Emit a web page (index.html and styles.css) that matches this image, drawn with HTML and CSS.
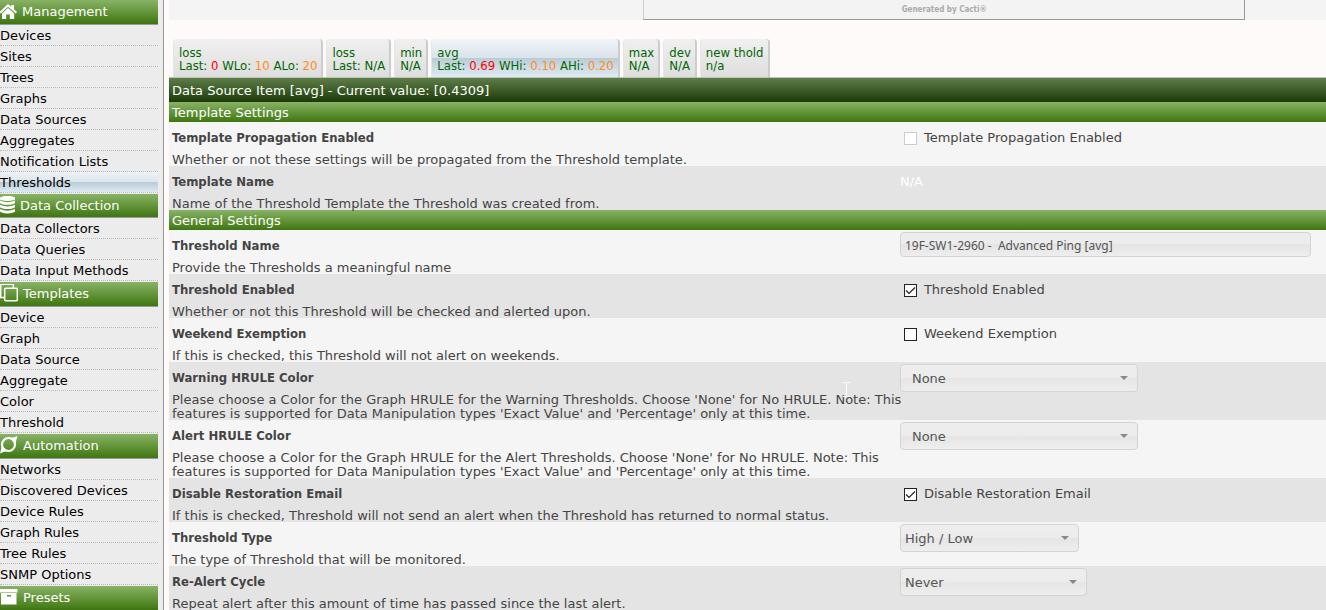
FILE: index.html
```html
<!DOCTYPE html>
<html lang="en">
<head>
<meta charset="utf-8">
<title>Thresholds</title>
<link rel="stylesheet" href="styles.css">
</head>
<body>
<div class="page">
  <nav class="sidebar">
    <h2 class="menu-head"><svg class="icon" width="17" height="20" viewBox="0 0 17 20"><path fill="#fff" d="M8 2l3.200 2.800V3H14v4.300l3 2.700-1.200 1.500L8 4.700.7 11.500-.6 10z"/><path fill="#fff" d="M8 6l6.200 5.500v5.500H9.800v-4.500H6.200V17H2v-5.500z"/></svg>Management</h2>
    <ul class="menu">
      <li><a href="#">Devices</a></li>
      <li><a href="#">Sites</a></li>
      <li><a href="#">Trees</a></li>
      <li><a href="#">Graphs</a></li>
      <li><a href="#">Data Sources</a></li>
      <li><a href="#">Aggregates</a></li>
      <li><a href="#">Notification Lists</a></li>
      <li><a href="#" class="selected">Thresholds</a></li>
    </ul>
    <h2 class="menu-head"><svg class="icon" width="15" height="19" viewBox="0 0 15 19"><g fill="#fff"><ellipse cx="7.500" cy="2.500" rx="8" ry="2.600"/><path d="M-.5 4.200q8 4 16 0v2q-1 2.600-8 2.600T-.5 6.200z"/><path d="M-.5 8.500q8 4 16 0v2q-1 2.600-8 2.600t-8-2.600z"/><path d="M-.5 12.800q8 4 16 0v2q-1 2.600-8 2.600t-8-2.600z"/></g></svg>Data Collection</h2>
    <ul class="menu">
      <li><a href="#">Data Collectors</a></li>
      <li><a href="#">Data Queries</a></li>
      <li><a href="#">Data Input Methods</a></li>
    </ul>
    <h2 class="menu-head"><svg class="icon" width="18" height="20" viewBox="0 0 18 20"><g fill="none" stroke="#fff" stroke-width="1.500"><path d="M4 13.500H.7V.2h12.600V4"/><rect x="4.700" y="4.200" width="12.600" height="12.600" rx="1"/></g></svg>Templates</h2>
    <ul class="menu">
      <li><a href="#">Device</a></li>
      <li><a href="#">Graph</a></li>
      <li><a href="#">Data Source</a></li>
      <li><a href="#">Aggregate</a></li>
      <li><a href="#">Color</a></li>
      <li><a href="#">Threshold</a></li>
    </ul>
    <h2 class="menu-head"><svg class="icon" width="18" height="20" viewBox="0 0 18 20"><circle cx="8.500" cy="8.500" r="6.500" fill="none" stroke="#fff" stroke-width="2.200"/><path fill="#fff" d="M17.500 0Q16 5 15.500 8L10 2Q14 1.500 17.500 0zM0 17.500Q1.500 12.500 1.500 9.500L7 15Q3 15.500 0 17.500z"/></svg>Automation</h2>
    <ul class="menu">
      <li><a href="#">Networks</a></li>
      <li><a href="#">Discovered Devices</a></li>
      <li><a href="#">Device Rules</a></li>
      <li><a href="#">Graph Rules</a></li>
      <li><a href="#">Tree Rules</a></li>
      <li><a href="#">SNMP Options</a></li>
    </ul>
    <h2 class="menu-head"><svg class="icon" width="18" height="20" viewBox="0 0 18 20"><path fill="#fff" d="M0 1h17.500v3.500H0zM1 4h15.500V16.500H1z"/><path fill="#5c9135" d="M1 4.500h15.500v.5H1zM7 7h4v1.500H7z"/></svg>Presets</h2>
  </nav>

  <main class="content">
    <div class="graph-strip"><div class="graph">Generated by Cacti®</div></div>
    <nav class="tabs">
      <a class="tab" href="#">loss<br>Last: <span class="red">0</span> WLo: <span class="orange">10</span> ALo: <span class="orange">20</span></a>
      <a class="tab" href="#">loss<br>Last: N/A</a>
      <a class="tab" href="#">min<br>N/A</a>
      <a class="tab active" href="#">avg<br>Last: <span class="red">0.69</span> WHi: <span class="orange">0.10</span> AHi: <span class="orange">0.20</span></a>
      <a class="tab" href="#">max<br>N/A</a>
      <a class="tab" href="#">dev<br>N/A</a>
      <a class="tab" href="#">new thold<br>n/a</a>
    </nav>
    <h1 class="title">Data Source Item [avg] - Current value: [0.4309]</h1>
    <form>
      <h3 class="section">Template Settings</h3>
      <div class="row">
        <div class="about"><div class="name">Template Propagation Enabled</div><div class="desc">Whether or not these settings will be propagated from the Threshold template.</div></div>
        <div class="field"><label class="check"><input type="checkbox" disabled>Template Propagation Enabled</label></div>
      </div>
      <div class="row alt">
        <div class="about"><div class="name">Template Name</div><div class="desc">Name of the Threshold Template the Threshold was created from.</div></div>
        <div class="field"><span class="value">N/A</span></div>
      </div>
      <h3 class="section">General Settings</h3>
      <div class="row">
        <div class="about"><label class="name" for="name">Threshold Name</label><div class="desc">Provide the Thresholds a meaningful name</div></div>
        <div class="field"><input class="text" id="name" type="text" value="19F-SW1-2960 -  Advanced Ping [avg]"></div>
      </div>
      <div class="row alt">
        <div class="about"><div class="name">Threshold Enabled</div><div class="desc">Whether or not this Threshold will be checked and alerted upon.</div></div>
        <div class="field"><label class="check"><input type="checkbox" checked>Threshold Enabled</label></div>
      </div>
      <div class="row">
        <div class="about"><div class="name">Weekend Exemption</div><div class="desc">If this is checked, this Threshold will not alert on weekends.</div></div>
        <div class="field"><label class="check"><input type="checkbox">Weekend Exemption</label></div>
      </div>
      <div class="row alt">
        <div class="about"><label class="name" for="warn">Warning HRULE Color</label><div class="desc">Please choose a Color for the Graph HRULE for the Warning Thresholds. Choose 'None' for No HRULE. Note: This features is supported for Data Manipulation types 'Exact Value' and 'Percentage' only at this time.</div>
          <svg class="pointer" width="7" height="15" viewBox="0 0 7 15"><path d="M0 .5h2.500l1 1 1-1H7M3.500 1v13M0 14.500h2.500l1-1 1 1H7" fill="none" stroke="#fff"/></svg></div>
        <div class="field"><select class="select color" id="warn"><option>None</option></select></div>
      </div>
      <div class="row">
        <div class="about"><label class="name" for="alert">Alert HRULE Color</label><div class="desc">Please choose a Color for the Graph HRULE for the Alert Thresholds. Choose 'None' for No HRULE. Note: This features is supported for Data Manipulation types 'Exact Value' and 'Percentage' only at this time.</div></div>
        <div class="field"><select class="select color" id="alert"><option>None</option></select></div>
      </div>
      <div class="row alt">
        <div class="about"><div class="name">Disable Restoration Email</div><div class="desc">If this is checked, Threshold will not send an alert when the Threshold has returned to normal status.</div></div>
        <div class="field"><label class="check"><input type="checkbox" checked>Disable Restoration Email</label></div>
      </div>
      <div class="row">
        <div class="about"><label class="name" for="type">Threshold Type</label><div class="desc">The type of Threshold that will be monitored.</div></div>
        <div class="field"><select class="select type" id="type"><option>High / Low</option></select></div>
      </div>
      <div class="row alt">
        <div class="about"><label class="name" for="cycle">Re-Alert Cycle</label><div class="desc">Repeat alert after this amount of time has passed since the last alert.</div></div>
        <div class="field"><select class="select cycle" id="cycle"><option>Never</option></select></div>
      </div>
    </form>
  </main>
</div>
</body>
</html>
```
FILE: styles.css
```css
* { box-sizing: border-box; }
body {
  margin: 0;
  background: #fffafa;
  color: #444;
  font: 13px/14px "DejaVu Sans", Verdana, sans-serif;
  overflow: hidden;
}
h1, h2, h3, ul { margin: 0; padding: 0; font-size: 13px; font-weight: normal; }
a { text-decoration: none; }
.page { display: flex; }

.sidebar {
  width: 164px;
  flex: none;
  padding-right: 5px;
  background: #ececec;
  border-right: 1px solid #999;
}
.menu-head {
  display: flex;
  align-items: center;
  gap: 5px;
  padding: 2px 0;
  color: #fff;
  background: linear-gradient(#88b365, #3f7610);
  border-bottom: 1px solid #999;
}
.icon { flex: none; }
.menu { list-style: none; padding-bottom: 1px; }
.menu a {
  display: block;
  padding-top: 2px;
  line-height: 18px;
  color: #000;
  border-bottom: 1px dotted #bbb;
}
.menu .selected { background: linear-gradient(#edf2f5, #dde6ec 50%, #b9cbd7 50%, #dde9f2); }

.content { flex: 1; min-width: 0; margin-left: 5px; }
.graph-strip { background: #f4f4f4; }
.graph {
  margin: 0 7% 0 41%;
  padding: 3px 0 2px;
  border: solid #999;
  border-width: 0 1px 1px;
  border-left-color: #ccc;
  background: #f3f3f3;
  color: #aaa;
  font-family: "DejaVu Sans Condensed", "DejaVu Sans", sans-serif;
  font-size: 8px;
  font-weight: bold;
  text-align: center;
}
.tabs {
  display: flex;
  gap: 3px;
  padding: 19px 4px 0;
  border-bottom: 1px solid #bbc4b4;
}
.tab {
  padding: 7px 4px 5px 5px;
  color: #060;
  font-family: "DejaVu Sans Condensed", "DejaVu Sans", sans-serif;
  line-height: 13px;
  white-space: nowrap;
  background: linear-gradient(#f0f0f0, #dedede);
  border-right: 2px solid #ccc;
  border-left: 1px solid #e6e6e6;
  border-radius: 4px 4px 0 0;
}
.tab.active { background: linear-gradient(#f0f5f8, #d9e3ea 50%, #b9cbd7 50%, #dfebf3); }
.red { color: #f00; }
.orange { color: #ff8c1a; }

.title {
  padding: 6px 3px 4px;
  color: #fff;
  background: linear-gradient(#5e7d49, #1c3a07);
}
.section {
  padding: 4px 3px 2px;
  color: #fff;
  background: linear-gradient(#88b365, #3f7610);
}
.row { display: grid; grid-template-columns: 63% 37%; background: #f5f5f5; }
.row.alt { background: #e4e4e4; }
.about { position: relative; padding-left: 3px; }
.name {
  display: block;
  padding-top: 2px;
  line-height: 28px;
  font-family: "DejaVu Sans Condensed", "DejaVu Sans", sans-serif;
  font-weight: bold;
}
.desc { margin: 1px -8px -1px 0; }
.field { display: flex; align-items: flex-start; padding: 2px 15px 0 2px; }
.check, .value { line-height: 28px; }
.value { color: #fff; }
.check { display: flex; align-items: center; gap: 7px; padding-left: 4px; }
.check input {
  appearance: none;
  width: 13px;
  height: 13px;
  margin: 0;
  border: 1px solid #222;
  background: #fff;
}
.check input:disabled { border-color: #ccc; }
.check input:checked {
  background: #fff url("data:image/svg+xml,%3Csvg xmlns='http://www.w3.org/2000/svg' viewBox='0 0 11 11'%3E%3Cpath d='M1 5.500l3 3L10 2.500' fill='none' stroke='%23222' stroke-width='1.200'/%3E%3C/svg%3E");
}
.text, .select {
  margin: 0;
  color: #555;
  border: 1px solid #d3d3d3;
  border-radius: 4px;
}
.text {
  flex: 1;
  height: 25px;
  padding: 2px 4px 0;
  font: 12px "Noto Sans", sans-serif;
  background: linear-gradient(#ededed, #ececec 50%, #e4e4e4 50%, #eee);
}
.select {
  appearance: none;
  height: 28px;
  padding: 0 4px;
  font: 13px "DejaVu Sans", sans-serif;
  background:
    url("data:image/svg+xml,%3Csvg xmlns='http://www.w3.org/2000/svg' width='8' height='4'%3E%3Cpath d='M0 0h8L4 4z' fill='%23888'/%3E%3C/svg%3E") no-repeat right 9px center,
    linear-gradient(#eee, #ececec 50%, #e5e5e5 50%, #eee);
}
.color { width: 238px; padding-left: 11px; }
.type { width: 179px; }
.cycle { width: 187px; }
.pointer { position: absolute; left: 674px; top: 20px; }
```
